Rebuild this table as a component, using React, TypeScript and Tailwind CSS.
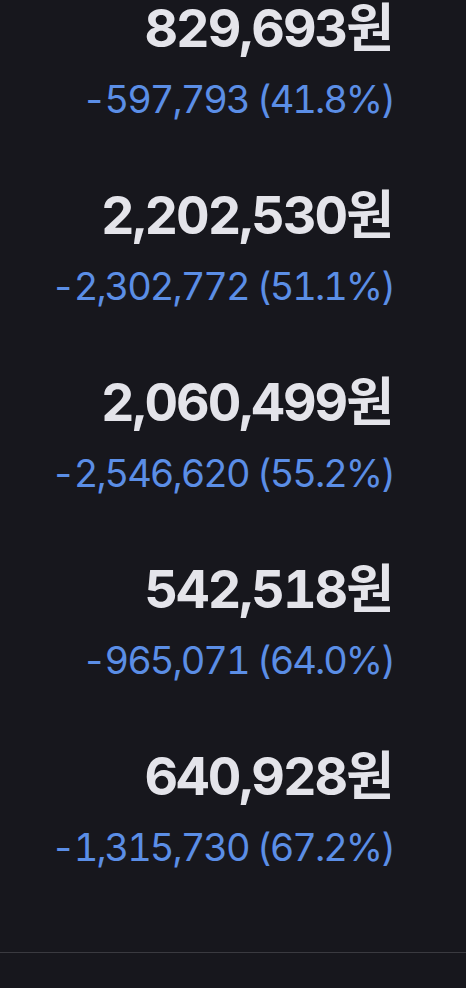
import React from 'react';

type Row = { price: string; diff: string; rate: string };

const rows: Row[] = [
    { price: '829,693', diff: '597,793', rate: '41.8%' },
    { price: '2,202,530', diff: '2,302,772', rate: '51.1%' },
    { price: '2,060,499', diff: '2,546,620', rate: '55.2%' },
    { price: '542,518', diff: '965,071', rate: '64.0%' },
    { price: '640,928', diff: '1,315,730', rate: '67.2%' },
];

const App: React.FC = () => {
    return (
        <div
            className="w-[466px] h-[988px] bg-[#17171d] overflow-hidden flex flex-col"
            style={{ fontFamily: 'Inter, "Noto Sans CJK KR", sans-serif' }}
        >
            <div className="flex flex-col items-end gap-[71px] pt-[3px] pr-[74px] tabular-nums">
                {rows.map((r) => (
                    <div key={r.price} className="flex flex-col items-end">
                        <p className="text-[52px] leading-[52px] font-bold text-[#e4e4ea] tracking-[-2px]">
                            {r.price}원
                        </p>
                        <p className="mt-[25px] mr-[-2px] text-[38px] leading-[39px] text-[#5b8ee6] tracking-[-2px]">
                            -{r.diff} ({r.rate})
                        </p>
                    </div>
                ))}
            </div>
            <div className="mt-auto mb-[35px] h-px bg-[#3a3a40]" />
        </div>
    );
};

export default App;
